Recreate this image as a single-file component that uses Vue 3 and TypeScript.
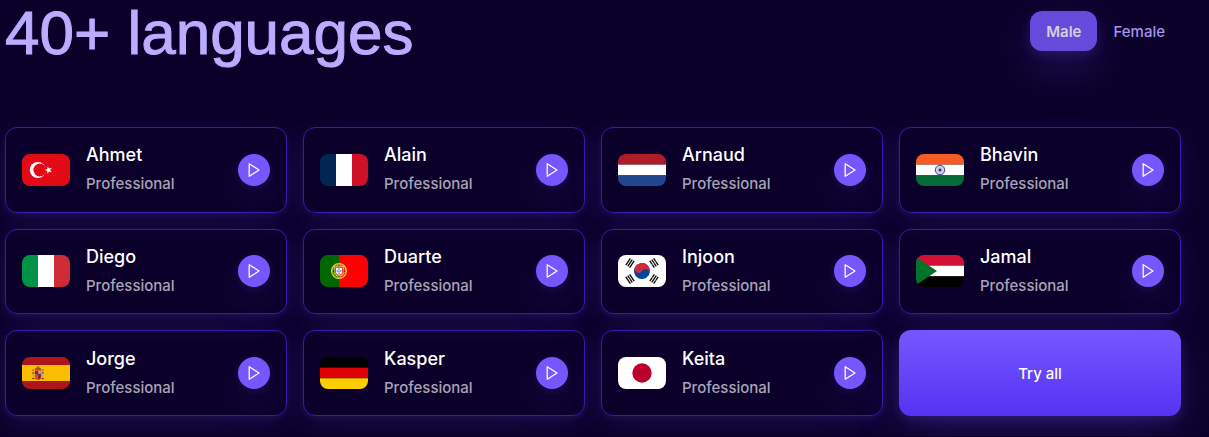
<script setup lang="ts">
import { ref } from 'vue'

type Country = 'tr' | 'fr' | 'nl' | 'in' | 'it' | 'pt' | 'kr' | 'sd' | 'es' | 'de' | 'jp'

interface Voice {
  name: string
  style: string
  country: Country
}

interface Band {
  x: number
  y: number
  w: number
  h: number
  fill: string
}

const genders = ['Male', 'Female'] as const
const active = ref<(typeof genders)[number]>('Male')

const voices: Voice[] = [
  { name: 'Ahmet', style: 'Professional', country: 'tr' },
  { name: 'Alain', style: 'Professional', country: 'fr' },
  { name: 'Arnaud', style: 'Professional', country: 'nl' },
  { name: 'Bhavin', style: 'Professional', country: 'in' },
  { name: 'Diego', style: 'Professional', country: 'it' },
  { name: 'Duarte', style: 'Professional', country: 'pt' },
  { name: 'Injoon', style: 'Professional', country: 'kr' },
  { name: 'Jamal', style: 'Professional', country: 'sd' },
  { name: 'Jorge', style: 'Professional', country: 'es' },
  { name: 'Kasper', style: 'Professional', country: 'de' },
  { name: 'Keita', style: 'Professional', country: 'jp' },
]

const rows = (...fills: string[]): Band[] =>
  fills.map((fill, i) => ({ x: 0, y: (32 / fills.length) * i, w: 48, h: 32 / fills.length, fill }))

const columns = (...fills: string[]): Band[] =>
  fills.map((fill, i) => ({ x: 16 * i, y: 0, w: 16, h: 32, fill }))

const bands: Record<Country, Band[]> = {
  tr: rows('#e30a17'),
  fr: columns('#002654', '#ffffff', '#ce1126'),
  nl: rows('#ae1c28', '#ffffff', '#21468b'),
  in: rows('#f45b25', '#ffffff', '#046a38'),
  it: columns('#009246', '#ffffff', '#ce2b37'),
  pt: [
    { x: 0, y: 0, w: 19, h: 32, fill: '#006600' },
    { x: 19, y: 0, w: 29, h: 32, fill: '#ff0000' },
  ],
  kr: rows('#ffffff'),
  sd: rows('#d21034', '#ffffff', '#000000'),
  es: rows('#ad1519', '#fabd00', '#fabd00', '#ad1519'),
  de: rows('#000000', '#dd0000', '#ffce00'),
  jp: rows('#ffffff'),
}

const trigrams = [
  { x: 12, y: 8, angle: -56, broken: [] },
  { x: 36, y: 8, angle: 56, broken: [-2.3, 0, 2.3] },
  { x: 12, y: 24, angle: 56, broken: [0] },
  { x: 36, y: 24, angle: -56, broken: [-2.3, 2.3] },
]
</script>

<template>
  <main class="page">
    <header class="top">
      <h1>40+ languages</h1>
      <div class="tabs" role="group" aria-label="Voice gender">
        <button
          v-for="gender in genders"
          :key="gender"
          type="button"
          class="tab"
          :class="{ active: gender === active }"
          :aria-pressed="gender === active"
          @click="active = gender"
        >
          {{ gender }}
        </button>
      </div>
    </header>

    <section class="grid" aria-label="Voices">
      <article v-for="voice in voices" :key="voice.name" class="card">
        <svg class="flag" viewBox="0 0 48 32" aria-hidden="true">
          <rect
            v-for="(band, i) in bands[voice.country]"
            :key="i"
            :x="band.x"
            :y="band.y"
            :width="band.w"
            :height="band.h"
            :fill="band.fill"
          />
          <g v-if="voice.country === 'tr'">
            <circle cx="15.8" cy="16" r="8" fill="#fff" />
            <circle cx="17.8" cy="16" r="6.4" fill="#e30a17" />
            <path
              fill="#fff"
              d="M22.6 16l2.8-.9v-2.9l1.7 2.4 2.8-.9-1.8 2.3 1.8 2.3-2.8-.9-1.7 2.4v-2.9z"
            />
          </g>
          <g v-else-if="voice.country === 'in'" stroke="#2b2f7e" fill="none">
            <circle cx="24" cy="16" r="4.7" stroke-width="0.9" />
            <path
              stroke-width="0.3"
              d="M24 11.5v9M19.5 16h9M20.8 12.8l6.4 6.4M27.2 12.8l-6.4 6.4M22.3 11.8l3.4 8.4M25.7 11.8l-3.4 8.4M19.8 14.3l8.4 3.4M28.2 14.3l-8.4 3.4"
            />
            <circle cx="24" cy="16" r="1.2" fill="#2b2f7e" stroke="none" />
          </g>
          <g v-else-if="voice.country === 'pt'">
            <circle cx="19" cy="16" r="7.4" fill="none" stroke="#e8d51c" stroke-width="1.2" />
            <ellipse cx="19" cy="16" rx="7.2" ry="3" fill="none" stroke="#e8d51c" stroke-width="0.8" />
            <ellipse cx="19" cy="16" rx="3" ry="7.2" fill="none" stroke="#e8d51c" stroke-width="0.8" />
            <path d="M12.8 12h12.4M12.8 20h12.4" stroke="#e8d51c" stroke-width="0.8" />
            <path d="M14.8 11.2h8.4v5.6a4.2 4.2 0 0 1-8.4 0z" fill="#e51b1b" stroke="#fff" stroke-width="0.6" />
            <path d="M16 12.8h6v4a3 3 0 0 1-6 0z" fill="#fff" />
            <path d="M19 13.4v1.4M19 15.4v1.4M19 17.4v1.4M16.6 16h1.4M20 16h1.4" stroke="#294a9c" stroke-width="1.2" />
          </g>
          <g v-else-if="voice.country === 'kr'">
            <g transform="rotate(33 24 16)">
              <circle cx="24" cy="16" r="8" fill="#0047a0" />
              <path d="M16 16a8 8 0 0 1 16 0a4 4 0 0 0-8 0a4 4 0 0 1-8 0z" fill="#cd2e3a" />
            </g>
            <g v-for="(t, i) in trigrams" :key="i" :transform="`translate(${t.x} ${t.y}) rotate(${t.angle})`">
              <path d="M-4-2.3h8M-4 0h8M-4 2.3h8" stroke="#111" stroke-width="1.4" />
              <path v-for="b in t.broken" :key="b" :d="`M0 ${b - 0.8}v1.6`" stroke="#fff" stroke-width="0.6" />
            </g>
          </g>
          <path v-else-if="voice.country === 'sd'" d="M-3 0L21 16L-3 32z" fill="#007229" />
          <g v-else-if="voice.country === 'es'">
            <path d="M11.3 13.5v8M20.7 13.5v8" stroke="#b9a58b" stroke-width="1.2" />
            <path d="M10.2 16h2.2M19.6 16h2.2M10.2 21.6h2.4M19.4 21.6h2.4M10.5 13h1.6M19.9 13h1.6" stroke="#8c2a24" stroke-width="1" />
            <path d="M13 13c-.5-1.800.8-2.700 3-2.700s3.500.9 3 2.700z" fill="#a6511d" />
            <path d="M16 9.300v1.500" stroke="#8c2a24" />
            <path d="M12.900 13.500h6.200v6a3.100 3.100 0 0 1-6.200 0z" fill="#ad1519" />
            <path d="M16 13.700h2.900v3.300h-2.900z" fill="#cb9a95" />
            <path d="M13.100 17h2.900v4.900a3 3 0 0 1-2.900-2.900z" fill="#c0662a" />
            <ellipse cx="16" cy="17.200" rx="1.200" ry="1.500" fill="#3c579e" />
          </g>
          <circle v-else-if="voice.country === 'jp'" cx="24" cy="16" r="9.7" fill="#bc002d" />
        </svg>
        <div class="info">
          <h2>{{ voice.name }}</h2>
          <p>{{ voice.style }}</p>
        </div>
        <button type="button" class="play" :aria-label="`Play ${voice.name}`">
          <svg viewBox="0 0 16 16" aria-hidden="true">
            <path d="M3.200 1.700v12.600L13 8z" />
          </svg>
        </button>
      </article>
      <button type="button" class="all">Try all</button>
    </section>
  </main>
</template>

<style>
html,
body {
  background: #0a0029;
}
</style>

<style scoped>
.page {
  box-sizing: border-box;
  padding: 0 28px 20px 5px;
  color: #fff;
  font-family: Inter, 'Liberation Sans', sans-serif;
}

.top {
  display: flex;
  align-items: flex-start;
  justify-content: space-between;
  margin-bottom: 61px;
}

h1 {
  margin: 0;
  color: #baacff;
  font-family: 'Liberation Sans', Arial, sans-serif;
  font-size: 62px;
  font-weight: 400;
  line-height: 66px;
  -webkit-text-stroke: 1px #baacff;
}

.tabs {
  display: flex;
  padding-top: 11px;
}

.tab {
  height: 40px;
  padding: 0 16px;
  border: 0;
  border-radius: 12px;
  background: transparent;
  color: #a594ee;
  font: inherit;
  font-size: 15px;
  font-weight: 500;
  cursor: pointer;
}

.tab.active {
  background: #644bd9;
  color: #d4d0dd;
  font-weight: 600;
  box-shadow:
    0 4px 12px rgb(117 87 255 / 18%),
    0 16px 48px rgb(117 87 255 / 24%);
}

.grid {
  display: grid;
  grid-template-columns: repeat(4, minmax(0, 1fr));
  grid-auto-rows: 1fr;
  gap: 16px;
  min-height: 289px;
}

.card {
  display: flex;
  align-items: center;
  gap: 16px;
  box-sizing: border-box;
  padding: 0 16px;
  border: 1px solid #361cac;
  border-radius: 12px;
  box-shadow:
    0 2px 6px rgb(117 87 255 / 12%),
    0 8px 32px rgb(117 87 255 / 14%);
}

.flag {
  flex: none;
  width: 48px;
  height: 32px;
  border-radius: 8px;
}

.info {
  flex: 1;
  min-width: 0;
}

h2,
p {
  margin: 0;
  line-height: 24px;
}

h2 {
  margin-bottom: 5px;
  font-size: 18px;
  font-weight: 500;
}

p {
  color: #a9a3b5;
  font-size: 15px;
  font-weight: 500;
}

.play {
  display: grid;
  place-items: center;
  flex: none;
  width: 32px;
  height: 32px;
  padding: 0;
  border: 0;
  border-radius: 50%;
  background: #7557ff;
  box-shadow:
    0 2px 8px rgb(117 87 255 / 14%),
    0 16px 40px rgb(117 87 255 / 16%);
  cursor: pointer;
}

.play svg {
  width: 16px;
  height: 16px;
  fill: none;
  stroke: #fff;
  stroke-width: 1.3;
  stroke-linejoin: round;
}

.all {
  border: 0;
  border-radius: 12px;
  background: linear-gradient(#7557ff, #5533f2);
  box-shadow:
    0 4px 12px rgb(117 87 255 / 20%),
    0 16px 48px rgb(117 87 255 / 20%);
  color: #fff;
  font: inherit;
  font-size: 15px;
  font-weight: 500;
  cursor: pointer;
}
</style>
